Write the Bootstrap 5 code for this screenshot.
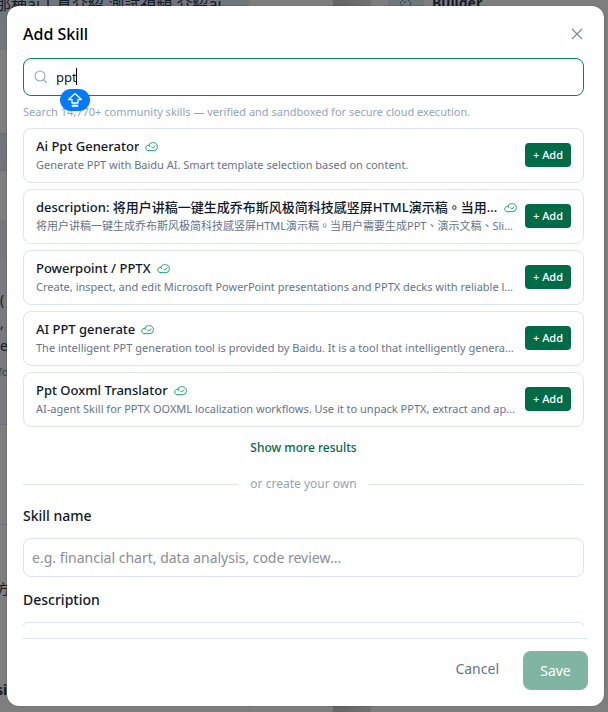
<!DOCTYPE html>
<html lang="en">
<head>
<meta charset="utf-8">
<meta name="viewport" content="width=device-width, initial-scale=1">
<title>Add Skill</title>
<link rel="stylesheet" href="https://cdn.jsdelivr.net/npm/bootstrap@5.3.0/dist/css/bootstrap.min.css">
<style>
body { font-family: "Noto Sans", "Noto Sans CJK TC", sans-serif; font-size: 14px; line-height: 20px; color: #0f172a; background: #808080; overflow: hidden; }
.backdrop-page { grid-template-columns: 250px 1fr 38px 17px 36px 184px; overflow: hidden; color: #161b27; background: #7e7e7e; }
.chat-side { border-right: 1px solid #737780; }
.chat-heading { height: 50px; background: #71767d; font-size: 16px; line-height: 8px; text-indent: -5px; }
.block-a { height: 83px; }
.block-b { height: 38px; background: #71747b; border-top: 1px solid #686c75; border-bottom: 1px solid #686c75; }
.block-c { height: 49px; }
.block-d { height: 38px; background: #75777a; }
.block-e { height: 167px; background: #787a7e; border-bottom: 1px solid #6c6f7c; padding-top: 30px; line-height: 23px; }
.block-f { height: 100px; border-bottom: 1px solid #6c6f7c; }
.block-g { height: 155px; padding-top: 54px; }
.side-text { text-indent: -4px; }
.side-note { font-size: 11px; line-height: 30px; color: #3b4250; text-indent: -2px; }
.track { background: linear-gradient(90deg, #636363, #727272); }
.agent-icon { height: 6px; background: #6f767d; overflow: hidden; }
.agent-name { font-size: 14px; line-height: 6px; padding-left: 8px; }
.dialog-layer { position: absolute; inset: 0; padding: 6px 4px 6px 7px; }
.dialog-box { background: #fff; border-radius: 12px; box-shadow: 0 0 2px rgba(0,0,0,.3); padding: 16px; }
.dialog-title { font-size: 16px; line-height: 24px; font-weight: 500; color: #000; margin: 0; }
.dialog-head { margin-bottom: 12px; }
.close-x { color: #7b8698; width: 14px; height: 24px; }
.dialog-scroll { padding-right: 4px; }
.line-input { border: 1px solid #dce4ed; border-radius: 8px; color: #0f172a; font-size: 14px; }
.line-input::placeholder { color: #8b8d94; opacity: 1; }
.search-input { height: 38px; border-color: #058558; font-size: 13px; padding: 0 12px 0 32px; }
.search-input:focus { border-color: #058558; box-shadow: none; }
.search-icon { position: absolute; left: 11px; top: 12px; color: #94a3b8; }
.text-caret { position: absolute; left: 53px; top: 10px; width: 1px; height: 17px; background: #000; }
.caps-pill { position: absolute; left: 37px; top: 31px; width: 30px; height: 22px; border-radius: 11px; background: #007aff; color: #fff; }
.hint { font-size: 11px; line-height: 16px; color: #94a3b8; margin: 8px 0; }
.results { gap: 6px; grid-template-columns: minmax(0, 1fr); }
.skill-card { border: 1px solid #dce4ed; border-radius: 8px; padding: 8px 12px 9px; }
.skill-name { font-size: 13px; line-height: 18px; font-weight: 500; }
.skill-desc { font-size: 11px; line-height: 17px; margin-top: 1px; color: #64748b; }
.min-zero { min-width: 0; }
.icon-gap { gap: 6px; }
.cloud { color: #10a06b; width: 13px; height: 11px; }
.btn-add { background: #006b47; color: #fff; border-radius: 4px; font-size: 11px; line-height: 16px; font-weight: 500; padding: 4px 8px; border: 0; height: 24px; white-space: nowrap; }
.btn-add:hover { background: #005a3c; color: #fff; }
.btn-more { color: #006b47; font-size: 12px; line-height: 18px; font-weight: 500; padding: 0; border: 0; margin: 12px 0; }
.or-row { font-size: 12px; line-height: 18px; gap: 12px; color: #94a3b8; margin: 6px 0 13px; }
.or-line { height: 1px; background: #dce4ed; }
.field-title { font-weight: 500; margin-bottom: 12px; }
.name-input { height: 39px; padding: 0 8px; margin-bottom: 13px; }
.dialog-foot { border-top: 1px solid #dce4ed; margin-top: 12px; padding-top: 12px; gap: 24px; }
.btn-cancel { color: #64748b; font-size: 14px; line-height: 20px; padding: 8px 0; border: 0; }
.btn-save, .btn-save:disabled { background: #80b5a3; color: #fff; border: 0; opacity: 1; border-radius: 8px; font-size: 14px; height: 39px; width: 65px; padding: 0; }
</style>
</head>
<body class="vh-100 position-relative">
<svg class="d-none" aria-hidden="true">
  <symbol id="cloud-check" viewBox="0 0 14 12">
    <path d="M3.500 10.500h6.200a3.800 3.800 0 0 0 3.700-3.900v-.6A4.100 4.100 0 0 0 9.200 1.800H7.800a3.600 3.600 0 0 0-3.500 2.900H3.200C1.700 4.900.7 6.200.7 7.700s1.200 2.800 2.800 2.800ZM4.300 4.700l.4 1.400M7 6.300l1.500 1.500 2.400-2.600" fill="none" stroke="currentColor" stroke-linecap="round" stroke-linejoin="round"/>
  </symbol>
</svg>

<div class="backdrop-page d-grid vh-100" aria-hidden="true">
  <div class="chat-side text-nowrap overflow-hidden">
    <div class="chat-heading">那種ai工具介紹 測試視頻 介紹ai</div>
    <div class="block-a"></div>
    <div class="block-b"></div>
    <div class="block-c"></div>
    <div class="block-d"></div>
    <div class="block-e">(<br>,<br>e<div class="side-note">fo</div></div>
    <div class="block-f"></div>
    <div class="block-g side-text">方</div>
    <div class="fw-bold side-text">si</div>
  </div>
  <div></div>
  <div class="track"></div>
  <div></div>
  <div><div class="agent-icon d-flex justify-content-center">
    <svg width="14" height="6" viewBox="0 0 14 6" fill="none" stroke="#2d3540" stroke-dasharray="2 1"><path d="M4 0L1 3l2 3M9 0l3 3-1 3M6 1v3"/></svg>
  </div></div>
  <div class="agent-name fw-bold">Builder</div>
</div>

<div class="dialog-layer">
  <main class="dialog-box d-flex flex-column h-100" role="dialog" aria-labelledby="dialog-title">
    <header class="dialog-head d-flex justify-content-between align-items-center pe-1">
      <h1 class="dialog-title" id="dialog-title">Add Skill</h1>
      <button type="button" class="close-x btn p-0 border-0 d-flex align-items-center justify-content-center" aria-label="Close">
        <svg width="12" height="12" viewBox="0 0 12 12" fill="none" stroke="currentColor" stroke-width="1.2"><path d="M1 1l10 10M11 1L1 11"/></svg>
      </button>
    </header>

    <div class="dialog-scroll flex-fill overflow-hidden">
      <div class="position-relative">
        <svg class="search-icon" width="14" height="14" viewBox="0 0 14 14" fill="none" stroke="currentColor" stroke-width="1.1" stroke-linecap="round"><circle cx="6" cy="6" r="5"/><path d="M9.600 9.600l3 3"/></svg>
        <input type="text" class="form-control line-input search-input" value="ppt" aria-label="Search skills">
        <span class="text-caret"></span>
        <span class="caps-pill d-flex align-items-center justify-content-center">
          <svg width="16" height="16" viewBox="0 0 16 16" fill="none" stroke="currentColor" stroke-width="1.3" stroke-linejoin="round"><path d="M8 1.500L1.500 7.500H5V11h6V7.500h3.500Z"/><path d="M5 13h6v1.500H5Z" fill="currentColor" stroke-width=".6"/></svg>
        </span>
      </div>
      <p class="hint">Search 14,770+ community skills — verified and sandboxed for secure cloud execution.</p>

      <div class="d-grid results">
        <article class="skill-card d-flex align-items-center gap-2">
          <div class="flex-fill min-zero">
            <div class="d-flex align-items-center icon-gap"><span class="skill-name text-truncate">Ai Ppt Generator</span><svg class="cloud flex-shrink-0"><use href="#cloud-check"/></svg></div>
            <div class="skill-desc text-truncate">Generate PPT with Baidu AI. Smart template selection based on content.</div>
          </div>
          <button type="button" class="btn btn-add flex-shrink-0">+ Add</button>
        </article>
        <article class="skill-card d-flex align-items-center gap-2">
          <div class="flex-fill min-zero">
            <div class="d-flex align-items-center icon-gap"><span class="skill-name text-truncate">description: 将用户讲稿一键生成乔布斯风极简科技感竖屏HTML演示稿。当用户需要</span><svg class="cloud flex-shrink-0"><use href="#cloud-check"/></svg></div>
            <div class="skill-desc text-truncate">将用户讲稿一键生成乔布斯风极简科技感竖屏HTML演示稿。当用户需要生成PPT、演示文稿、Slides</div>
          </div>
          <button type="button" class="btn btn-add flex-shrink-0">+ Add</button>
        </article>
        <article class="skill-card d-flex align-items-center gap-2">
          <div class="flex-fill min-zero">
            <div class="d-flex align-items-center icon-gap"><span class="skill-name text-truncate">Powerpoint / PPTX</span><svg class="cloud flex-shrink-0"><use href="#cloud-check"/></svg></div>
            <div class="skill-desc text-truncate">Create, inspect, and edit Microsoft PowerPoint presentations and PPTX decks with reliable layouts</div>
          </div>
          <button type="button" class="btn btn-add flex-shrink-0">+ Add</button>
        </article>
        <article class="skill-card d-flex align-items-center gap-2">
          <div class="flex-fill min-zero">
            <div class="d-flex align-items-center icon-gap"><span class="skill-name text-truncate">AI PPT generate</span><svg class="cloud flex-shrink-0"><use href="#cloud-check"/></svg></div>
            <div class="skill-desc text-truncate">The intelligent PPT generation tool is provided by Baidu. It is a tool that intelligently generates PPT</div>
          </div>
          <button type="button" class="btn btn-add flex-shrink-0">+ Add</button>
        </article>
        <article class="skill-card d-flex align-items-center gap-2">
          <div class="flex-fill min-zero">
            <div class="d-flex align-items-center icon-gap"><span class="skill-name text-truncate">Ppt Ooxml Translator</span><svg class="cloud flex-shrink-0"><use href="#cloud-check"/></svg></div>
            <div class="skill-desc text-truncate">AI-agent Skill for PPTX OOXML localization workflows. Use it to unpack PPTX, extract and apply text</div>
          </div>
          <button type="button" class="btn btn-add flex-shrink-0">+ Add</button>
        </article>
      </div>

      <div class="d-flex justify-content-center"><button type="button" class="btn btn-more">Show more results</button></div>
      <div class="or-row d-flex align-items-center"><span class="or-line flex-fill"></span>or create your own<span class="or-line flex-fill"></span></div>

      <label class="field-title d-block" for="skill-name">Skill name</label>
      <input type="text" id="skill-name" class="form-control line-input name-input" placeholder="e.g. financial chart, data analysis, code review...">
      <label class="field-title d-block" for="skill-description">Description</label>
      <textarea id="skill-description" class="form-control line-input rounded-1" rows="3"></textarea>
    </div>

    <footer class="dialog-foot d-flex justify-content-end align-items-start">
      <button type="button" class="btn btn-cancel">Cancel</button>
      <button type="button" class="btn btn-save" disabled>Save</button>
    </footer>
  </main>
</div>
<script src="https://cdn.jsdelivr.net/npm/bootstrap@5.3.0/dist/js/bootstrap.bundle.min.js"></script>
</body>
</html>
